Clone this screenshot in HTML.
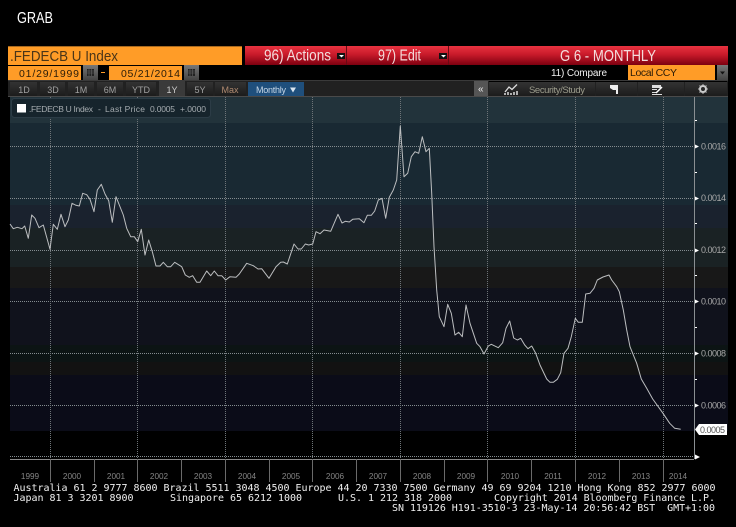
<!DOCTYPE html>
<html><head><meta charset="utf-8"><style>
html,body{margin:0;padding:0;background:#000;width:736px;height:527px;overflow:hidden}
svg{display:block}
text{font-family:"Liberation Sans",sans-serif}
.m{font-family:"DejaVu Sans Mono","Liberation Mono",monospace;font-size:10px;fill:#f0f0f0}
.y{font-family:"Liberation Sans",sans-serif;font-size:8.200px;fill:#858585}
.a{font-size:9px;fill:#a8a8a8}
.t{font-size:9px;fill:#a0a0a0}
</style></head><body>
<svg width="736" height="527" viewBox="0 0 736 527" xmlns="http://www.w3.org/2000/svg">
<defs>
<linearGradient id="r" x1="0" y1="0" x2="0" y2="1"><stop offset="0" stop-color="#e8323f"/><stop offset=".45" stop-color="#c81a2a"/><stop offset="1" stop-color="#7d0010"/></linearGradient>
<linearGradient id="tb" x1="0" y1="0" x2="0" y2="1"><stop offset="0" stop-color="#333"/><stop offset="1" stop-color="#1c1c1c"/></linearGradient>
<linearGradient id="cal" x1="0" y1="0" x2="0" y2="1"><stop offset="0" stop-color="#777"/><stop offset="1" stop-color="#444"/></linearGradient>
</defs>
<rect width="736" height="527" fill="#000"/>
<text x="17" y="23" font-size="16" fill="#fff" textLength="36" lengthAdjust="spacingAndGlyphs">GRAB</text>

<!-- top row -->
<rect x="8" y="46" width="234" height="19" fill="#ff9c27"/><rect x="8" y="46" width="234" height="1" fill="#a86a20"/>
<text x="10" y="61" font-size="15" fill="#4a3518" textLength="108" lengthAdjust="spacingAndGlyphs">.FEDECB U Index</text>
<rect x="245" y="46" width="483" height="19" fill="url(#r)"/>
<rect x="346" y="46" width="1" height="19" fill="#6a0a14"/><rect x="448" y="46" width="1" height="19" fill="#6a0a14"/>
<text x="264" y="60.500" font-size="15.500" fill="#f4dcdc" textLength="67" lengthAdjust="spacingAndGlyphs">96) Actions</text>
<text x="378" y="60.500" font-size="15.500" fill="#f4dcdc" textLength="43" lengthAdjust="spacingAndGlyphs">97) Edit</text>
<text x="560" y="61" font-size="15.500" fill="#f4dcdc" textLength="96" lengthAdjust="spacingAndGlyphs">G 6 - MONTHLY</text>
<rect x="337" y="53" width="8" height="6" fill="#111"/><path d="M339 55h5l-2.500 2.500z" fill="#fff"/>
<rect x="439" y="53" width="8" height="6" fill="#111"/><path d="M441 55h5l-2.500 2.500z" fill="#fff"/>

<!-- date row -->
<rect x="8" y="66" width="73" height="14" fill="#ff9c27"/>
<text x="19" y="77" font-size="10.500" fill="#2a1c08" textLength="60" lengthAdjust="spacing">01/29/1999</text>
<rect x="83" y="65" width="15" height="15" fill="url(#cal)"/>
<path d="M87 69h7v7h-7z" fill="#222"/><path d="M87 71h7M87 73h7M89 69v7M91.500 69v7" stroke="#666" stroke-width=".6"/>
<rect x="101" y="72" width="4" height="1" fill="#ff9c27"/>
<rect x="109" y="66" width="73" height="14" fill="#ff9c27"/>
<text x="121" y="77" font-size="10.500" fill="#2a1c08" textLength="59" lengthAdjust="spacing">05/21/2014</text>
<rect x="184" y="65" width="15" height="15" fill="url(#cal)"/>
<path d="M188 69h7v7h-7z" fill="#222"/><path d="M188 71h7M188 73h7M190 69v7M192.500 69v7" stroke="#666" stroke-width=".6"/>
<text x="551" y="76" font-size="10" fill="#f0f0f0" textLength="56" lengthAdjust="spacing">11) Compare</text>
<rect x="628" y="65" width="87" height="15" fill="#ff9c27"/>
<text x="630" y="76" font-size="10.500" fill="#2a1c08" textLength="47" lengthAdjust="spacing">Local CCY</text>
<rect x="717" y="65" width="11" height="15" fill="url(#cal)"/><path d="M720 71.500h5l-2.500 3z" fill="#111"/>

<!-- toolbar -->
<rect x="8" y="80" width="720" height="17" fill="#212121"/><rect x="8" y="80" width="720" height="1" fill="#3a3a3a"/>
<g fill="url(#tb)">
<rect x="10" y="82" width="27" height="14"/><rect x="40" y="82" width="25" height="14"/><rect x="68" y="82" width="26" height="14"/><rect x="97" y="82" width="26" height="14"/><rect x="126" y="82" width="30" height="14"/><rect x="159" y="82" width="26" height="14"/><rect x="187" y="82" width="26" height="14"/><rect x="215" y="82" width="31" height="14"/>
</g>
<rect x="159" y="81" width="26" height="15" fill="#3a3a3a"/>
<rect x="248" y="82" width="56" height="14" fill="#1f4f7c"/>
<g class="t" text-anchor="middle" font-size="9">
<text class="t" x="24" y="93">1D</text><text class="t" x="53" y="93">3D</text><text class="t" x="81" y="93">1M</text><text class="t" x="110" y="93">6M</text><text class="t" x="141" y="93">YTD</text><text class="t" x="172" y="93" style="fill:#ccc">1Y</text><text class="t" x="200" y="93">5Y</text><text class="t" x="230" y="93" style="fill:#b08a70">Max</text>
</g>
<text x="256" y="93" font-size="9" fill="#c6d6e6" textLength="30" lengthAdjust="spacing">Monthly</text>
<path d="M290 87.500h6l-3 5z" fill="#d8e4f0"/>
<rect x="474" y="81" width="14" height="15" fill="#555"/>
<text x="478" y="92" font-size="10" fill="#eee">«</text>
<g fill="url(#tb)"><rect x="489" y="82" width="106" height="14"/><rect x="596" y="82" width="41" height="14"/><rect x="638" y="82" width="46" height="14"/><rect x="685" y="82" width="42" height="14"/></g>
<rect x="489" y="81" width="238" height="1" fill="#000"/>
<path d="M505 92l4-5 3 2.500 5-5" fill="none" stroke="#ddd" stroke-width="1.300"/><path d="M505 95v-2M508 95v-3M511 95v-2M514 95v-3M517 95v-4" stroke="#ddd" stroke-width="1.500"/>
<text x="529" y="93" font-size="9.500" fill="#9c9c8c" textLength="56" lengthAdjust="spacing">Security/Study</text>
<path d="M610 85h8v9h-2v-4h-3l-3-2z" fill="#eee"/>
<path d="M652 85h9v3h-9zM652 89h5v1h-5zM652 92h4v1h-4zM652 94h10v1h-10z" fill="#ddd"/><path d="M656 93l6-6" stroke="#fff" stroke-width="1.500"/>
<circle cx="703" cy="89" r="3" fill="none" stroke="#ccc" stroke-width="2"/><path d="M703 84v10M698 89h10M699.500 85.500l7 7M706.500 85.500l-7 7" stroke="#bbb" stroke-width="1" stroke-dasharray="1.500 7 1.500"/>
<rect x="8" y="96" width="720" height="1" fill="#4a4a4a"/>

<!-- chart bands -->
<rect x="10" y="97" width="718" height="26" fill="#22333b"/>
<rect x="10" y="123" width="718" height="82" fill="#192933"/>
<rect x="10" y="205" width="718" height="23" fill="#1a222e"/>
<rect x="10" y="228" width="718" height="39" fill="#1a2224"/>
<rect x="10" y="267" width="718" height="21" fill="#181818"/>
<rect x="10" y="288" width="718" height="57" fill="#10121c"/>
<rect x="10" y="345" width="718" height="17" fill="#0c1414"/>
<rect x="10" y="362" width="718" height="13" fill="#121212"/>
<rect x="10" y="375" width="718" height="56" fill="#0b0c18"/>

<!-- grid -->
<g stroke-width="1" stroke-dasharray="1 1" fill="none">
<path stroke="#848c90" d="M10 146.500H694M10 198.500H694M10 250.500H694M10 301.500H694M10 353.500H694M10 405.500H694M10 456.500H694"/>
<path stroke="#6e7478" d="M50.500 97V459M137.500 97V459M225.500 97V459M312.500 97V459M400.500 97V459M487.500 97V459M575.500 97V459M663.500 97V459"/>
</g>
<!-- axes -->
<path d="M694.500 97V459" stroke="#8a8f92"/>
<path d="M10 459.500H694" stroke="#8a8a8a"/>
<g stroke="#fff"><path d="M695 120.500h2M695 172.500h2M695 223.500h2M695 275.500h2M695 327.500h2M695 379.500h2"/></g>
<g fill="#fff"><path d="M695 144.500l4 2-4 2zM695 196.500l4 2-4 2zM695 248.500l4 2-4 2zM695 299.500l4 2-4 2zM695 351.500l4 2-4 2zM695 403.500l4 2-4 2zM695 454.500l5 2.500-5 2.500z"/></g>
<g class="a">
<text class="a" x="701" y="149.500" textLength="25" lengthAdjust="spacing">0.0016</text>
<text class="a" x="701" y="201" textLength="25" lengthAdjust="spacing">0.0014</text>
<text class="a" x="701" y="253" textLength="25" lengthAdjust="spacing">0.0012</text>
<text class="a" x="701" y="304.500" textLength="25" lengthAdjust="spacing">0.0010</text>
<text class="a" x="701" y="356.500" textLength="25" lengthAdjust="spacing">0.0008</text>
<text class="a" x="701" y="408.500" textLength="25" lengthAdjust="spacing">0.0006</text>
</g>
<path d="M695 429.500l4-5.500h28v11h-28z" fill="#fff"/>
<text x="700" y="433" font-size="9" fill="#555" textLength="25" lengthAdjust="spacing">0.0005</text>

<!-- legend -->
<rect x="11.500" y="98.500" width="199" height="19" rx="3" fill="#16242c" stroke="#2c3c46"/>
<rect x="17" y="104" width="9" height="8.500" fill="#fff"/>
<g font-size="8.500" fill="#a6acb0">
<text x="29" y="112" textLength="64" lengthAdjust="spacing">.FEDECB U Index</text>
<text x="98" y="112">-</text>
<text x="105" y="112" textLength="40" lengthAdjust="spacing">Last Price</text>
<text x="150" y="112" textLength="25" lengthAdjust="spacing">0.0005</text>
<text x="180" y="112" textLength="26" lengthAdjust="spacing">+.0000</text>
</g>

<!-- price line -->
<polyline fill="none" stroke="#bcbec0" stroke-width="1" stroke-linejoin="round" points="10,224 13.300,228.700 17.300,227.300 22,228.700 24.700,226 28.300,238.300 31.700,215 35,218.300 39,227.700 43.300,225 50,249.300 53.300,224.300 57.300,229.300 61,214.300 65,226.700 68.300,220 72,203.300 76,205.300 79.300,206 82.700,193.300 86.700,194.700 90,199.300 94,211.700 97.300,190 101.300,184.300 105,194 108.700,200.700 112.300,222.300 116,196.700 123.300,215 126.700,228.300 130.700,236.700 134.300,236.700 137.700,241.700 141.300,229.300 145,255 148.700,240 152.300,251.700 156,266 160,266 163.300,262.300 167.300,266.700 170.700,266.700 174.700,262.300 181.700,266.700 185.300,275 189.300,277.300 192.700,275.700 196.700,282.300 200,282.300 206.700,271 210.700,275.700 214.300,271 218,275.700 221.700,275.700 225.700,280 230,276.700 236,277.300 239.300,274 246.700,263.300 253.300,265.700 258,269 261.700,268.700 269,278.300 276,266.700 280.700,262.300 283.300,262 287.300,264 294,244 298,249 301.300,249 305.300,244 308.700,245 312.700,244 316,231.700 320,233.700 324,230 330.700,231.300 338,214.300 342,223 345.300,221.300 349.300,222 352.700,219.300 359.300,218.700 364,222.700 367.300,215.300 371.300,215.300 374.700,211 378.300,200 382,198.300 385.700,218.300 389.300,197.300 393.300,190 396.700,180 400.300,126 404,176.700 407.700,173.300 411.300,156.700 415,151.700 418.700,153.300 422.300,136.700 426,151.700 429.300,148.300 431.700,193.300 434,246.700 436.700,290 439.300,316.700 444,326.700 447.700,304.300 451.300,313.300 455,335 458.700,332.300 462.300,336.700 466,305 470,323.300 476.700,343.300 480,346.700 484,354 488.300,346 491.300,344.300 498.300,347.700 502.700,342.700 506,328.300 509.700,321 513.700,338 517.300,340 520.700,338.300 524.700,345 528,348.700 531.700,346 535.700,353.300 540,365 546.700,379 550,382.300 553.300,382.300 557.300,379.300 560.700,372.700 564,353.300 568,348.300 571.300,336.700 575.300,318.300 578.300,322.300 582.300,322.300 585.700,294 590,293.300 594,288.300 597.300,280 603,277 609,275 611.700,280 616.700,286.700 619.300,291.700 623.300,310 626.700,330 630,346.700 636.700,363.300 641.300,379 646.700,388.300 652.700,399 663,413.300 669.700,423.300 674.700,428.300 680.700,429.300"/>

<!-- year ticks -->
<g stroke="#6a6a6a"><path d="M50.500 459V482M94.500 459V482M137.500 459V482M181.500 459V482M225.500 459V482M269.500 459V482M312.500 459V482M356.500 459V482M400.500 459V482M444.500 459V482M487.500 459V482M531.500 459V482M575.500 459V482M619.500 459V482M663.500 459V482"/></g>
<g text-anchor="middle">
<text class="y" x="30" y="479">1999</text><text class="y" x="72" y="479">2000</text><text class="y" x="116" y="479">2001</text><text class="y" x="159" y="479">2002</text><text class="y" x="203" y="479">2003</text><text class="y" x="247" y="479">2004</text><text class="y" x="291" y="479">2005</text><text class="y" x="335" y="479">2006</text><text class="y" x="378" y="479">2007</text><text class="y" x="422" y="479">2008</text><text class="y" x="466" y="479">2009</text><text class="y" x="510" y="479">2010</text><text class="y" x="553" y="479">2011</text><text class="y" x="597" y="479">2012</text><text class="y" x="641" y="479">2013</text><text class="y" x="678" y="479">2014</text>
</g>

<!-- footer -->
<text class="m" x="13.500" y="491" textLength="702" lengthAdjust="spacing" xml:space="preserve">Australia 61 2 9777 8600 Brazil 5511 3048 4500 Europe 44 20 7330 7500 Germany 49 69 9204 1210 Hong Kong 852 2977 6000</text>
<text class="m" x="13.500" y="501" xml:space="preserve" textLength="120" lengthAdjust="spacing">Japan 81 3 3201 8900</text>
<text class="m" x="170" y="501" xml:space="preserve" textLength="132" lengthAdjust="spacing">Singapore 65 6212 1000</text>
<text class="m" x="338" y="501" xml:space="preserve" textLength="114" lengthAdjust="spacing">U.S. 1 212 318 2000</text>
<text class="m" x="494" y="501" xml:space="preserve" textLength="221" lengthAdjust="spacing">Copyright 2014 Bloomberg Finance L.P.</text>
<text class="m" x="392" y="511" xml:space="preserve" textLength="323" lengthAdjust="spacing">SN 119126 H191-3510-3 23-May-14 20:56:42 BST  GMT+1:00</text>
</svg>
</body></html>
